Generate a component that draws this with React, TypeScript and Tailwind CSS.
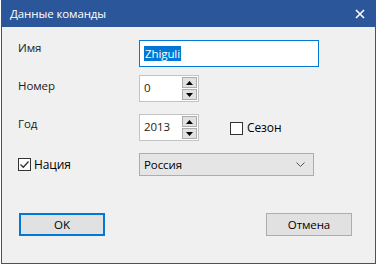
import React from "react";

// Spin control arrows drawn as tiny triangles
const Spin = () => (
  <div className="flex flex-col gap-[1px] mr-[1px]">
    <div className="w-[15px] h-[11px] bg-[#e1e1e1] border border-[#adadad] flex items-center justify-center">
      <svg width="7" height="4" viewBox="0 0 7 4">
        <path d="M3.5 0 L7 4 L0 4 Z" fill="#000" />
      </svg>
    </div>
    <div className="w-[15px] h-[11px] bg-[#e1e1e1] border border-[#adadad] flex items-center justify-center">
      <svg width="7" height="4" viewBox="0 0 7 4">
        <path d="M0 0 L7 0 L3.5 4 Z" fill="#000" />
      </svg>
    </div>
  </div>
);

const NumberBox = ({ value }: { value: string }) => (
  <div className="w-[60px] h-[27px] bg-white border border-[#c4c4c4] flex items-center justify-between pl-[4px]">
    <span className="-mt-[2px] text-[#222]">{value}</span>
    <Spin />
  </div>
);

const Checkbox = ({ checked }: { checked?: boolean }) => (
  <div className="w-[13px] h-[13px] bg-white border border-[#333333] flex items-center justify-center">
    {checked && (
      <svg width="11" height="11" viewBox="0 0 11 11">
        <path d="M1.5 5.5 L4.3 8.3 L9.5 2.5" stroke="#333" strokeWidth="1.3" fill="none" />
      </svg>
    )}
  </div>
);

export default function App() {
  return (
    <div
      className="w-[378px] h-[265px] bg-white text-[11.5px] tracking-[-0.1px] text-black"
      style={{ fontFamily: '"Open Sans", "Noto Sans", sans-serif' }}
    >
      <div className="ml-[1px] w-[375px] h-[264px] border border-[#2b579a] border-t-0 bg-[#f0f0f0] flex flex-col">
        {/* title bar */}
        <div className="h-[27px] bg-[#2b579a] text-white flex items-center justify-between pl-[8px] pr-[10px]">
          <span className="text-[11.5px] mt-[1px]">Данные команды</span>
          <svg width="10" height="10" viewBox="0 0 10 10">
            <path d="M1 1 L9 9 M9 1 L1 9" stroke="#fff" strokeWidth="1.6" />
          </svg>
        </div>

        <div className="flex flex-col pl-[16px]">
          {/* name */}
          <div className="flex items-start mt-[13px]">
            <span className="w-[121px] -mt-[1px] text-[#1a1a1a]">Имя</span>
            <div className="w-[180px] h-[27px] bg-white border border-[#0078d7] flex items-center pl-[4px]">
              <span className="bg-[#0078d7] text-white px-[1px] leading-[15px]">Zhiguli</span>
            </div>
          </div>

          {/* number */}
          <div className="flex items-start mt-[8px]">
            <span className="w-[121px] mt-[2px] text-[#1a1a1a]">Номер</span>
            <NumberBox value="0" />
          </div>

          {/* year + season */}
          <div className="flex items-start mt-[12px]">
            <span className="w-[121px] mt-[1px] text-[#1a1a1a]">Год</span>
            <NumberBox value="2013" />
            <div className="flex items-center gap-[4px] ml-[31px] mt-[5px]">
              <Checkbox />
              <span className="text-[12px]">Сезон</span>
            </div>
          </div>

          {/* nation */}
          <div className="flex items-center mt-[12px]">
            <div className="w-[121px] flex items-center gap-[3px]">
              <Checkbox checked />
              <span className="text-[12px]">Нация</span>
            </div>
            <div className="w-[175px] h-[23px] bg-[#e5e5e5] border border-[#adadad] flex items-center justify-between pl-[4px] pr-[8px]">
              <span>Россия</span>
              <svg width="9" height="5" viewBox="0 0 9 5">
                <path d="M0.5 0.5 L4.5 4.5 L8.5 0.5" stroke="#555" strokeWidth="1" fill="none" />
              </svg>
            </div>
          </div>

          {/* buttons */}
          <div className="flex items-center mt-[37px] pr-[23px] justify-between">
            <div className="ml-[1px] w-[86px] h-[23px] bg-[#e1e1e1] border-2 border-[#0078d7] flex items-center justify-center">
              OK
            </div>
            <div className="w-[86px] h-[23px] bg-[#e1e1e1] border border-[#adadad] flex items-center justify-center">
              Отмена
            </div>
          </div>
        </div>
      </div>
    </div>
  );
}
